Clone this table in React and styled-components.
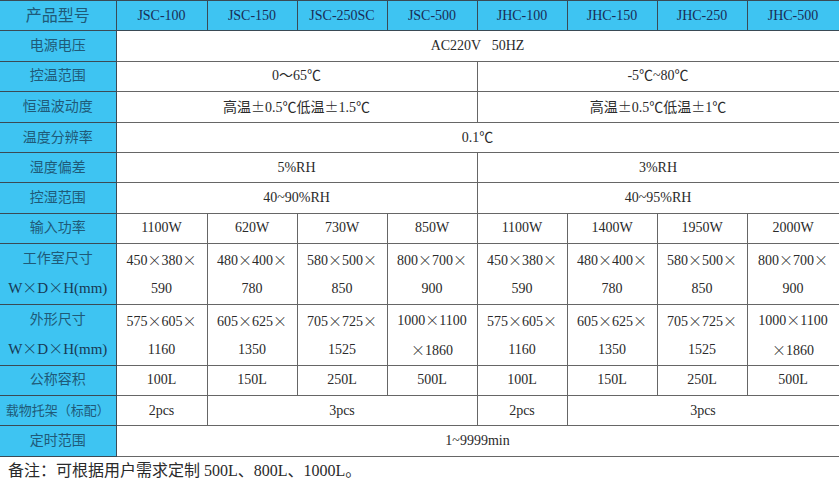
import React from "react"
import styled, { createGlobalStyle } from "styled-components"

const GlobalStyle = createGlobalStyle`
  html, body {
    margin: 0;
    padding: 0;
    background: #fff;
  }
  body {
    font-family: "Liberation Serif", "Noto Sans CJK SC", serif;
  }
`

const Sheet = styled.table`
  width: 839px;
  table-layout: fixed;
  border-collapse: collapse;
  font-family: "Liberation Serif", "Noto Sans CJK SC", serif;
  font-size: 14px;
  color: #2a2a2a;
`

const Row = styled.tr`
  height: ${(p) => (p.$double ? "60.6px" : "30.3px")};
`

const Label = styled.th`
  background: #3ec4f2;
  color: #1f5a78;
  font-weight: normal;
  font-size: ${(p) => p.$size || 14}px;
  border: 1px solid #3a4a55;
  border-left: none;
  padding: 0;
  line-height: 28px;
  text-align: center;
  white-space: nowrap;
`

const Latin = styled.span`
  color: #183a55;
  font-family: "Liberation Serif", "Noto Sans CJK SC", serif;
  font-size: 15px;
`

const Wide = styled.span`
  font-family: "Noto Sans CJK SC", sans-serif;
  font-weight: 300;
`

const Head = styled.th`
  background: #3ec4f2;
  color: #1a2c55;
  font-weight: normal;
  font-size: 14px;
  border: 1px solid #3a4a55;
  padding: 0;
  text-align: center;
`

const Cell = styled.td`
  border: 1px solid #666;
  padding: 0;
  text-align: center;
  line-height: 28px;
  white-space: nowrap;
`

const Note = styled.td`
  border: 1px solid #777;
  border-left: none;
  padding: 0 0 0 8px;
  font-size: 16px;
  line-height: 28px;
  color: #2a2a2a;
  text-align: left;
`

const models = [
  "JSC-100",
  "JSC-150",
  "JSC-250SC",
  "JSC-500",
  "JHC-100",
  "JHC-150",
  "JHC-250",
  "JHC-500",
]

const widths = [116, 91, 90, 90, 90, 90, 90, 90, 92]

const power = ["1100W", "620W", "730W", "850W", "1100W", "1400W", "1950W", "2000W"]
const room = [
  ["450", "380", "", "590"],
  ["480", "400", "", "780"],
  ["580", "500", "", "850"],
  ["800", "700", "", "900"],
]
const outer = [
  ["575", "605", "", "1160"],
  ["605", "625", "", "1350"],
  ["705", "725", "", "1525"],
  ["1000", "1100", null, "1860"],
]
const volume = ["100L", "150L", "250L", "500L"]

const X = () => <Wide>×</Wide>
const PM = () => <Wide>±</Wide>

// a, b on the first line; trailing × either at end of line 1 or start of line 2
const Size = ({ d }) => (
  <>
    {d[0]}
    <X />
    {d[1]}
    {d[2] !== null && <X />}
    <br />
    {d[2] === null && <X />}
    {d[3]}
  </>
)

const Dims = () => (
  <Latin>
    W<X />D<X />H(mm)
  </Latin>
)

export default function App() {
  return (
    <>
      <GlobalStyle />
      <Sheet>
        <colgroup>
          {widths.map((w, i) => (
            <col key={i} style={{ width: w }} />
          ))}
        </colgroup>
        <tbody>
          <Row>
            <Label $size={16}>产品型号</Label>
            {models.map((m) => (
              <Head key={m}>{m}</Head>
            ))}
          </Row>
          <Row>
            <Label>电源电压</Label>
            <Cell colSpan={8}>AC220V&nbsp;&nbsp;&nbsp;50HZ</Cell>
          </Row>
          <Row>
            <Label>控温范围</Label>
            <Cell colSpan={4}>0～65℃</Cell>
            <Cell colSpan={4}>-5℃~80℃</Cell>
          </Row>
          <Row>
            <Label>恒温波动度</Label>
            <Cell colSpan={4}>
              高温<PM />0.5℃低温<PM />1.5℃
            </Cell>
            <Cell colSpan={4}>
              高温<PM />0.5℃低温<PM />1℃
            </Cell>
          </Row>
          <Row>
            <Label>温度分辨率</Label>
            <Cell colSpan={8}>0.1℃</Cell>
          </Row>
          <Row>
            <Label>湿度偏差</Label>
            <Cell colSpan={4}>5%RH</Cell>
            <Cell colSpan={4}>3%RH</Cell>
          </Row>
          <Row>
            <Label>控湿范围</Label>
            <Cell colSpan={4}>40~90%RH</Cell>
            <Cell colSpan={4}>40~95%RH</Cell>
          </Row>
          <Row>
            <Label>输入功率</Label>
            {power.map((p, i) => (
              <Cell key={i}>{p}</Cell>
            ))}
          </Row>
          <Row $double>
            <Label>
              工作室尺寸
              <br />
              <Dims />
            </Label>
            {[...room, ...room].map((r, i) => (
              <Cell key={i}>
                <Size d={r} />
              </Cell>
            ))}
          </Row>
          <Row $double>
            <Label>
              外形尺寸
              <br />
              <Dims />
            </Label>
            {[...outer, ...outer].map((r, i) => (
              <Cell key={i}>
                <Size d={r} />
              </Cell>
            ))}
          </Row>
          <Row>
            <Label>公称容积</Label>
            {[...volume, ...volume].map((v, i) => (
              <Cell key={i}>{v}</Cell>
            ))}
          </Row>
          <Row>
            <Label $size={13}>载物托架（标配）</Label>
            <Cell>2pcs</Cell>
            <Cell colSpan={3}>3pcs</Cell>
            <Cell>2pcs</Cell>
            <Cell colSpan={3}>3pcs</Cell>
          </Row>
          <Row>
            <Label>定时范围</Label>
            <Cell colSpan={8}>1~9999min</Cell>
          </Row>
          <Row>
            <Note colSpan={9}>备注：可根据用户需求定制 500L、800L、1000L。</Note>
          </Row>
        </tbody>
      </Sheet>
    </>
  )
}
